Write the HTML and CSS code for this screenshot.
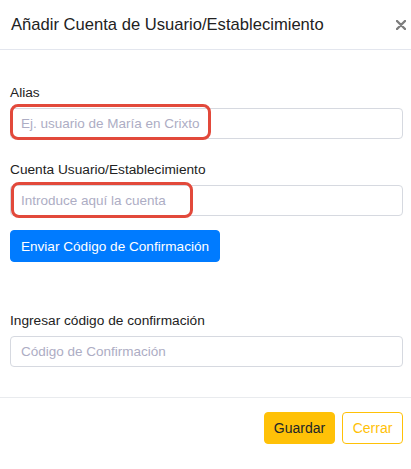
FILE: index.html
```html
<!DOCTYPE html>
<html>
<head>
<link rel="stylesheet" href="styles.css">
</head>
<body>
  <div class="modal-content">
    <div class="modal-header">
      <h5 class="modal-title">Añadir Cuenta de Usuario/Establecimiento</h5>
      <button class="close" aria-label="Close">
        <svg width="10" height="10" viewBox="0 0 10 10"><path d="M1 1L9 9M9 1L1 9" stroke="#7d7d7d" stroke-width="2.4" stroke-linecap="round"/></svg>
      </button>
    </div>
    <div class="modal-body">
      <div class="form-group first">
        <label>Alias</label>
        <div class="field">
          <input type="text" class="form-control" placeholder="Ej. usuario de María en Crixto">
          <div class="mark mark-alias"></div>
        </div>
      </div>
      <div class="form-group">
        <label>Cuenta Usuario/Establecimiento</label>
        <div class="field">
          <input type="text" class="form-control" placeholder="Introduce aquí la cuenta">
          <div class="mark mark-cuenta"></div>
        </div>
      </div>
      <button class="btn btn-primary">Enviar Código de Confirmación</button>
      <div class="form-group code">
        <label>Ingresar código de confirmación</label>
        <input type="text" class="form-control" placeholder="Código de Confirmación">
      </div>
    </div>
    <div class="modal-footer">
      <button class="btn btn-warning">Guardar</button>
      <button class="btn btn-outline-warning">Cerrar</button>
    </div>
  </div>
</body>
</html>
```

FILE: styles.css
```css
/* Modal laid out as a full page */
body {
  margin: 0;
  background: #fff;
  font-family: "Liberation Sans", Arial, sans-serif;
  color: #212529;
}

.modal-content {
  width: 411px;
  height: 469px;
  display: flex;
  flex-direction: column;
}

.modal-header {
  height: 49px;
  border-bottom: 1px solid #e3e6ee;
  display: flex;
  align-items: center;
  justify-content: space-between;
  padding: 0 5px 0 11px;
}

.modal-title {
  margin: 0;
  font-size: 16.6px;
  font-weight: normal;
  color: #222;
}

.close {
  background: none;
  border: none;
  padding: 0;
  width: 10px;
  height: 10px;
  display: flex;
}

.modal-body {
  padding: 0 8px 0 10px;
  height: 347px;
}

.form-group {
  margin-top: 21px;
}

.form-group.first {
  margin-top: 33px;
}

.form-group.code {
  margin-top: 49px;
}

label {
  display: block;
  font-size: 13.7px;
  line-height: 20px;
  margin-bottom: 5px;
  color: #222;
}

.field {
  position: relative;
}

.form-control {
  box-sizing: border-box;
  width: 100%;
  height: 31px;
  border: 1px solid #d6d9e0;
  border-radius: 4px;
  padding: 0 10px;
  font-family: inherit;
  font-size: 13.5px;
  color: #495057;
  outline: none;
}

.form-control::placeholder {
  color: #adadc4;
}

/* red highlight boxes drawn over the inputs */
.mark {
  position: absolute;
  border: 3px solid #e2493b;
  border-radius: 8px;
  box-sizing: border-box;
}

.mark-alias {
  left: 0;
  top: -4px;
  width: 201px;
  height: 36px;
}

.mark-cuenta {
  left: 1px;
  top: -3px;
  width: 182px;
  height: 36px;
}

.btn {
  font-family: inherit;
  font-size: 14px;
  height: 32px;
  border-radius: 4px;
  padding: 0;
  white-space: nowrap;
  cursor: pointer;
}

.btn-primary {
  display: block;
  margin-top: 14px;
  background: #007bff;
  border: 1px solid #007bff;
  color: #fff;
  width: 210px;
  font-size: 13.6px;
}

.modal-footer {
  border-top: 1px solid #e9ebee;
  display: flex;
  justify-content: flex-end;
  gap: 7px;
  padding: 14px 8px 0 0;
}

.btn-warning {
  background: #ffc107;
  border: 1px solid #ffc107;
  color: #212529;
  width: 71px;
}

.btn-outline-warning {
  background: #fff;
  border: 1px solid #ffc107;
  color: #ffc107;
  width: 61px;
}
```
